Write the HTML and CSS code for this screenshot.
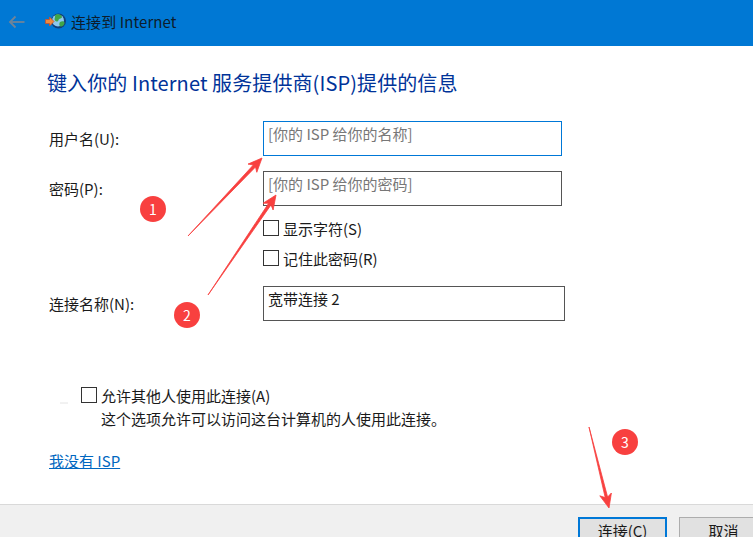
FILE: index.html
```html
<!DOCTYPE html>
<html lang="zh-CN">

<head>
    <meta charset="UTF-8">
    <title>连接到 Internet</title>
    <link rel="stylesheet" href="styles.css">
</head>

<body>
    <div class="titlebar">
        <svg class="back-icon" width="18" height="14" viewBox="0 0 18 14" fill="none" stroke="#6f8499" stroke-width="1.8">
            <path d="M16.5 7H2"></path>
            <path d="M7.5 1.500L2 7l5.500 5.500"></path>
        </svg>
        <svg class="app-icon" width="21" height="17" viewBox="0 0 21 17">
            <circle cx="13.500" cy="8" r="7.500" fill="#123f7a"></circle>
            <circle cx="13" cy="7.500" r="6" fill="#8cc8ee"></circle>
            <path d="M11 1.500c3-1 6 .5 6 2.500s-3 1-3.500 3 -2.500 2-3.500.5 0-2.500 0-3.500 0-2 1-2.500z" fill="#3fa648"></path>
            <path d="M15 9c2-1 4.500-1 4.500 1s-2.500 4-4 3.500S14 10 15 9z" fill="#3fa648"></path>
            <path d="M0.500 6.500h4V4l4.500 4.500-4.500 4.500v-2.500h-4z" fill="#f08a3c" stroke="#c9502a" stroke-width=".8"></path>
        </svg>
        <span class="window-title">连接到 Internet</span>
    </div>

    <div class="content">
        <h1 class="heading">键入你的 Internet 服务提供商(ISP)提供的信息</h1>

        <div class="form">
            <label class="form-label form-label-top">用户名(U):</label>
            <div class="text-input text-input-focus placeholder">[你的 ISP 给你的名称]</div>

            <label class="form-label form-label-top">密码(P):</label>
            <div class="text-input placeholder">[你的 ISP 给你的密码]</div>

            <div class="check-list">
                <div class="check-row"><span class="checkbox"></span>显示字符(S)</div>
                <div class="check-row"><span class="checkbox"></span>记住此密码(R)</div>
            </div>

            <label class="form-label">连接名称(N):</label>
            <div class="text-input text-input-wide">宽带连接 2</div>
        </div>

        <div class="share">
            <div class="check-row"><span class="checkbox"></span>允许其他人使用此连接(A)</div>
            <p class="share-note">这个选项允许可以访问这台计算机的人使用此连接。</p>
        </div>

        <a class="no-isp" href="#">我没有 ISP</a>
    </div>

    <div class="footer">
        <button class="btn btn-primary">连接(C)</button>
        <button class="btn">取消</button>
    </div>

    <!-- red annotations drawn on top of the dialog -->
    <svg class="arrows" width="753" height="537" viewBox="0 0 753 537">
        <path d="M60 403h8" stroke="#e4e4e4" stroke-width="1"></path>
        <g fill="#f8403f" stroke="#f8403f" stroke-width="0.8" stroke-linejoin="round">
            <polygon points="188,236 255.500,167 256.800,172.300 262,158 248,164.100 253.300,165"></polygon>
            <polygon points="208,295 271,204.900 273.100,210 276,195 263.100,203.200 268.600,203.300"></polygon>
            <polygon points="589,427 607.600,497 611.400,493 609,508 599.800,495.800 605.200,497.600"></polygon>
        </g>
    </svg>
    <span class="badge badge-1">1</span>
    <span class="badge badge-2">2</span>
    <span class="badge badge-3">3</span>
</body>

</html>
```

FILE: styles.css
```css
* {
    margin: 0;
    padding: 0;
    box-sizing: border-box;
    font-family: "Noto Sans CJK SC", "Noto Sans", sans-serif;
}

body {
    width: 753px;
    height: 537px;
    overflow: hidden;
    background-color: white;
    color: #1a1a1a;
    font-size: 15px;
    display: flex;
    flex-direction: column;
    position: relative;
}

.titlebar {
    height: 46px;
    background-color: #0078d4;
    display: flex;
    align-items: center;
    padding: 0 0 3px 8px;
    flex-shrink: 0;
}

.back-icon {
    margin-right: 19px;
}

.app-icon {
    margin-right: 5px;
}

.window-title {
    font-size: 15px;
    color: #0d1c2b;
    letter-spacing: 0.1px;
}

.content {
    flex: 1;
    padding: 23px 0 0 47px;
}

.heading {
    font-size: 20px;
    font-weight: 400;
    line-height: 28px;
    color: #003399;
    letter-spacing: 0.1px;
}

.form {
    display: grid;
    grid-template-columns: 214px auto;
    justify-content: start;
    align-items: center;
    margin-top: 24px;
    margin-left: 2px;
}

.form-label {
    line-height: 20px;
}

.form-label-top {
    align-self: start;
    padding-top: 8px;
}

.text-input {
    width: 299px;
    height: 35px;
    border: 1px solid #555;
    padding: 2px 4px;
    line-height: 20px;
    margin-bottom: 15px;
}

.text-input-focus {
    border-color: #0078d7;
}

.text-input-wide {
    width: 302px;
    margin-bottom: 0;
}

.placeholder {
    color: #777;
}

.check-list {
    grid-column: 2;
    display: flex;
    flex-direction: column;
    gap: 10px;
    margin-top: -3px;
    margin-bottom: 18px;
}

.check-row {
    display: flex;
    align-items: center;
    gap: 4px;
    height: 20px;
}

.checkbox {
    width: 16px;
    height: 16px;
    border: 1px solid #333;
    background-color: white;
}

.share {
    margin: 64px 0 0 34px;
}

.share-note {
    margin-top: 4px;
    margin-left: 20px;
    line-height: 20px;
}

.no-isp {
    display: inline-block;
    margin: 22px 0 0 2px;
    color: #0067c0;
    line-height: 20px;
}

.footer {
    height: 33px;
    flex-shrink: 0;
    background-color: #f0f0f0;
    border-top: 1px solid #d9d9d9;
    display: flex;
    gap: 12px;
    padding: 12px 0 0 578px;
}

.btn {
    width: 89px;
    height: 26px;
    flex-shrink: 0;
    border: 1px solid #adadad;
    border-bottom: none;
    background-color: #e1e1e1;
    color: #1a1a1a;
    font-size: 15px;
    line-height: 20px;
}

.btn-primary {
    border: 2px solid #0078d7;
    border-bottom: none;
}

.arrows {
    position: absolute;
    top: 0;
    left: 0;
}

.badge {
    position: absolute;
    width: 26px;
    height: 26px;
    border-radius: 50%;
    background-color: #f8403f;
    color: white;
    font-size: 14px;
    line-height: 26px;
    text-align: center;
}

.badge-1 {
    left: 140px;
    top: 196px;
}

.badge-2 {
    left: 174px;
    top: 302px;
}

.badge-3 {
    left: 612px;
    top: 429px;
}
```
